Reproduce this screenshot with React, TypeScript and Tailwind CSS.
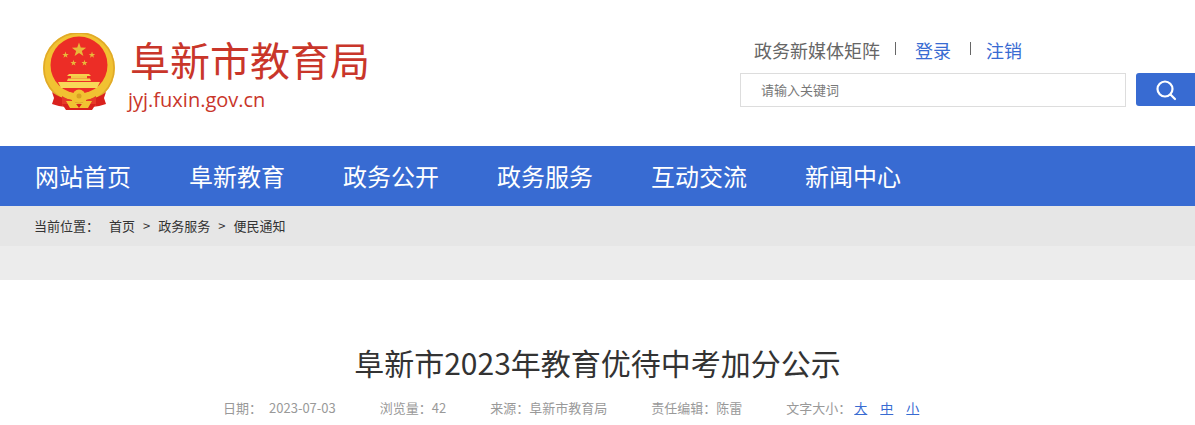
import React from "react";

const font = { fontFamily: '"Noto Sans CJK SC", sans-serif' };

function star(cx: number, cy: number, r: number) {
  const pts: string[] = [];
  for (let i = 0; i < 10; i++) {
    const rad = i % 2 === 0 ? r : r * 0.4;
    const a = -Math.PI / 2 + (i * Math.PI) / 5;
    pts.push(`${(cx + rad * Math.cos(a)).toFixed(2)},${(cy + rad * Math.sin(a)).toFixed(2)}`);
  }
  return pts.join(" ");
}

function Emblem() {
  return (
    <svg viewBox="43 33 72 78" width="72" height="78" className="block shrink-0">
      <circle cx="79" cy="68" r="36" fill="#f1c232" />
      <circle cx="79" cy="68" r="35" fill="none" stroke="#e0a92a" strokeWidth="1.5" />
      <circle cx="79" cy="65" r="28.5" fill="#ec2d26" />
      <polygon points={star(79, 50, 7.5)} fill="#e8b93a" />
      <polygon points={star(65.5, 55, 3.4)} fill="#e8b93a" />
      <polygon points={star(92, 55, 3.4)} fill="#e8b93a" />
      <polygon points={star(73.5, 63, 3.2)} fill="#e8b93a" />
      <polygon points={star(84.5, 63, 3.2)} fill="#e8b93a" />
      <path d="M69 74 L89 74 L91 76 L67 76 Z" fill="#f6d04d" />
      <rect x="71" y="76" width="16" height="2.5" fill="#f3c847" />
      <path d="M68 78.5 H90 L91 81 H67 Z" fill="#f6d04d" />
      <path d="M58 82 H100 L97 88 H61 Z" fill="#f8d858" />
      <path d="M52 92 C58 97 66 99 72 100 L70 106 C66 108 58 106 52 104 L54 98 Z" fill="#d9211d" />
      <path d="M106 92 C100 97 92 99 86 100 L88 106 C92 108 100 106 106 104 L104 98 Z" fill="#d9211d" />
      <path d="M62 96 C68 100 72 100 72 100 L70 106 L62 106 Z" fill="#e63a28" />
      <path d="M96 96 C90 100 86 100 86 100 L88 106 L96 106 Z" fill="#e63a28" />
      <circle cx="79" cy="96" r="6.5" fill="#f1c232" />
      <circle cx="79" cy="96" r="2.5" fill="#d9a022" />
      <path d="M62 104 H96 L92 110 H66 Z" fill="#d9211d" />
      <path d="M66 101 L74 101 L79 108 L84 101 L92 101 L88 108 H70 Z" fill="#f1c232" />
    </svg>
  );
}

const navItems = ["网站首页", "阜新教育", "政务公开", "政务服务", "互动交流", "新闻中心"];

export default function App() {
  return (
    <div className="h-[425px] w-[1195px] overflow-hidden bg-white" style={font}>
      <header className="flex h-[146px] justify-between">
        <div className="flex pl-[43px] pt-[33px]">
          <Emblem />
          <div className="ml-[15px] flex flex-col text-[#c9362a]">
            <div className="mt-[2px] text-[40px] leading-[48px]">阜新市教育局</div>
            <div className="-ml-[2px] mt-[4px] text-[20px] leading-[26px] [font-family:'Open_Sans',sans-serif]">jyj.fuxin.gov.cn</div>
          </div>
        </div>
        <div className="w-[455px] pt-[38px]">
          <div className="flex h-[24px] items-center pl-[14px] text-[18px] leading-[24px]">
            <span className="text-[#666666]">政务新媒体矩阵</span>
            <span className="mb-[4px] ml-[15px] h-[13px] w-px bg-[#666666]" />
            <span className="ml-[19px] text-[#386bd2]">登录</span>
            <span className="mb-[4px] ml-[19px] h-[13px] w-px bg-[#666666]" />
            <span className="ml-[15px] text-[#386bd2]">注销</span>
          </div>
          <div className="mt-[11px] flex items-start">
            <div className="flex h-[34px] w-[386px] items-center border border-[#dddddd] pl-[20px] text-[13px] text-[#777777]">请输入关键词</div>
            <div className="ml-[10px] flex h-[33px] w-[59px] items-center justify-center rounded-l-[3px] bg-[#386bd2]">
              <svg width="22" height="22" viewBox="0 0 22 22" fill="none" stroke="white" strokeWidth="2.2">
                <circle cx="10" cy="10" r="7.5" />
                <path d="M15.5 15.5 L20 20" strokeLinecap="round" />
              </svg>
            </div>
          </div>
        </div>
      </header>
      <nav className="flex h-[60px] items-center gap-[58px] bg-[#386bd2] pl-[35px] text-[24px] text-white">
        {navItems.map((t) => (
          <span key={t} className="w-[96px] whitespace-nowrap">{t}</span>
        ))}
      </nav>
      <div className="flex h-[40px] items-center bg-[#e6e6e6] pl-[34px] text-[13px] text-[#333333]">
        <span>当前位置：</span>
        <span className="ml-[10px]">首页</span>
        <span className="mx-[8px]">&gt;</span>
        <span>政务服务</span>
        <span className="mx-[8px]">&gt;</span>
        <span>便民通知</span>
      </div>
      <div className="h-[34px] bg-[#ececec]" />
      <h1 className="mt-[60px] text-center text-[30px] font-normal leading-[44px] text-[#333333]">阜新市2023年教育优待中考加分公示</h1>
      <div className="mt-[14px] flex h-[20px] items-center pl-[223px] text-[13px] text-[#999999]">
        <span>日期：</span>
        <span className="ml-[7px]">2023-07-03</span>
        <span className="ml-[44px]">浏览量：</span>
        <span>42</span>
        <span className="ml-[44px]">来源：</span>
        <span>阜新市教育局</span>
        <span className="ml-[44px]">责任编辑：</span>
        <span>陈雷</span>
        <span className="ml-[44px]">文字大小：</span>
        <span className="ml-[3px] text-[#386bd2] underline">大</span>
        <span className="ml-[13px] text-[#386bd2] underline">中</span>
        <span className="ml-[13px] text-[#386bd2] underline">小</span>
      </div>
    </div>
  );
}
